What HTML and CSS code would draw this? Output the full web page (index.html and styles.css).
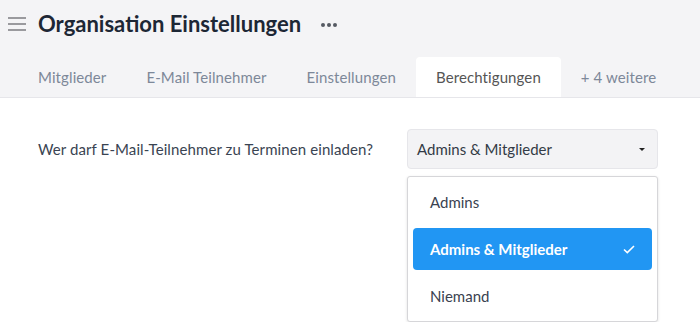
FILE: index.html
```html
<!DOCTYPE html>
<html lang="de">
<head>
    <meta charset="UTF-8">
    <title>Organisation Einstellungen</title>
    <link rel="stylesheet" href="styles.css">
</head>
<body>
    <div class="header">
        <div class="title-row">
            <span class="menu-icon">
                <svg width="18" height="16" viewBox="0 0 18 16">
                    <rect x="0" y="1" width="18" height="2" fill="#9a9a9e"/>
                    <rect x="0" y="7" width="18" height="2" fill="#9a9a9e"/>
                    <rect x="0" y="13" width="18" height="2" fill="#9a9a9e"/>
                </svg>
            </span>
            <h1 class="title">Organisation Einstellungen</h1>
            <span class="more">
                <svg width="16" height="4" viewBox="0 0 16 4">
                    <circle cx="2" cy="2" r="2" fill="#555a63"/>
                    <circle cx="8" cy="2" r="2" fill="#555a63"/>
                    <circle cx="14" cy="2" r="2" fill="#555a63"/>
                </svg>
            </span>
        </div>
        <div class="tabs">
            <div class="tab">Mitglieder</div>
            <div class="tab">E-Mail Teilnehmer</div>
            <div class="tab">Einstellungen</div>
            <div class="tab active">Berechtigungen</div>
            <div class="tab">+ 4 weitere</div>
        </div>
    </div>

    <div class="content">
        <div class="setting">
            <div class="label">Wer darf E-Mail-Teilnehmer zu Terminen einladen?</div>
            <div class="select">
                <span>Admins &amp; Mitglieder</span>
                <span class="caret"></span>
            </div>
            <!-- geöffnetes Dropdown -->
            <div class="dropdown">
                <div class="option">Admins</div>
                <div class="option selected">
                    <span>Admins &amp; Mitglieder</span>
                    <svg width="12" height="9" viewBox="0 0 12 9">
                        <path d="M1 4.5 L4.3 7.6 L11 1" fill="none" stroke="#fff" stroke-width="1.6"/>
                    </svg>
                </div>
                <div class="option">Niemand</div>
            </div>
        </div>
    </div>
</body>
</html>
```

FILE: styles.css
```css
body {
    margin: 0;
    font-family: Lato, "Open Sans", sans-serif;
    background-color: #fff;
    color: #3a4250;
}
.header {
    background-color: #f4f4f6;
    border-bottom: 1px solid #e6e6ea;
    height: 97px;
    display: flex;
    flex-direction: column;
}
.title-row {
    display: flex;
    align-items: center;
    height: 48px;
    padding-left: 8px;
}
.menu-icon {
    display: flex;
    margin-right: 12px;
}
.title {
    margin: 0;
    font-size: 22px;
    font-weight: bold;
    color: #1d2735;
}
.more {
    display: flex;
    margin-left: 20px;
    margin-top: 2px;
}
.tabs {
    display: flex;
    margin-top: 10px;
    padding-left: 18px;
}
.tab {
    height: 39px;
    line-height: 40px;
    padding: 0 20px;
    font-size: 15px;
    letter-spacing: 0.1px;
    color: #7d8899;
    border-radius: 4px 4px 0 0;
}
.tab.active {
    background-color: #fff;
    color: #555;
    height: 40px;
}
.content {
    padding: 31px 0 0 38px;
}
.setting {
    display: grid;
    grid-template-columns: 369px 251px;
    align-items: center;
}
.label {
    font-size: 15px;
    letter-spacing: 0.1px;
    color: #3a4452;
}
.select {
    height: 38px;
    border: 1px solid #e6e6ea;
    border-radius: 4px;
    background-color: #f3f3f5;
    display: flex;
    align-items: center;
    justify-content: space-between;
    padding: 0 12px 0 9px;
    font-size: 15px;
    color: #333b46;
}
.caret {
    width: 0;
    height: 0;
    border-left: 3px solid transparent;
    border-right: 3px solid transparent;
    border-top: 3px solid #222;
}
.dropdown {
    grid-column: 2;
    margin-top: 7px;
    background: #fff;
    border: 1px solid #d6d6d9;
    border-radius: 3px;
    box-shadow: 0 1px 3px rgba(0,0,0,0.12);
    padding: 4px 5px;
    display: flex;
    flex-direction: column;
    gap: 5px;
}
.option {
    height: 42px;
    display: flex;
    align-items: center;
    justify-content: space-between;
    padding: 0 17px;
    font-size: 15px;
    color: #3a4250;
    border-radius: 4px;
}
.option.selected {
    background-color: #2196f3;
    color: #fff;
    font-weight: bold;
}
```
